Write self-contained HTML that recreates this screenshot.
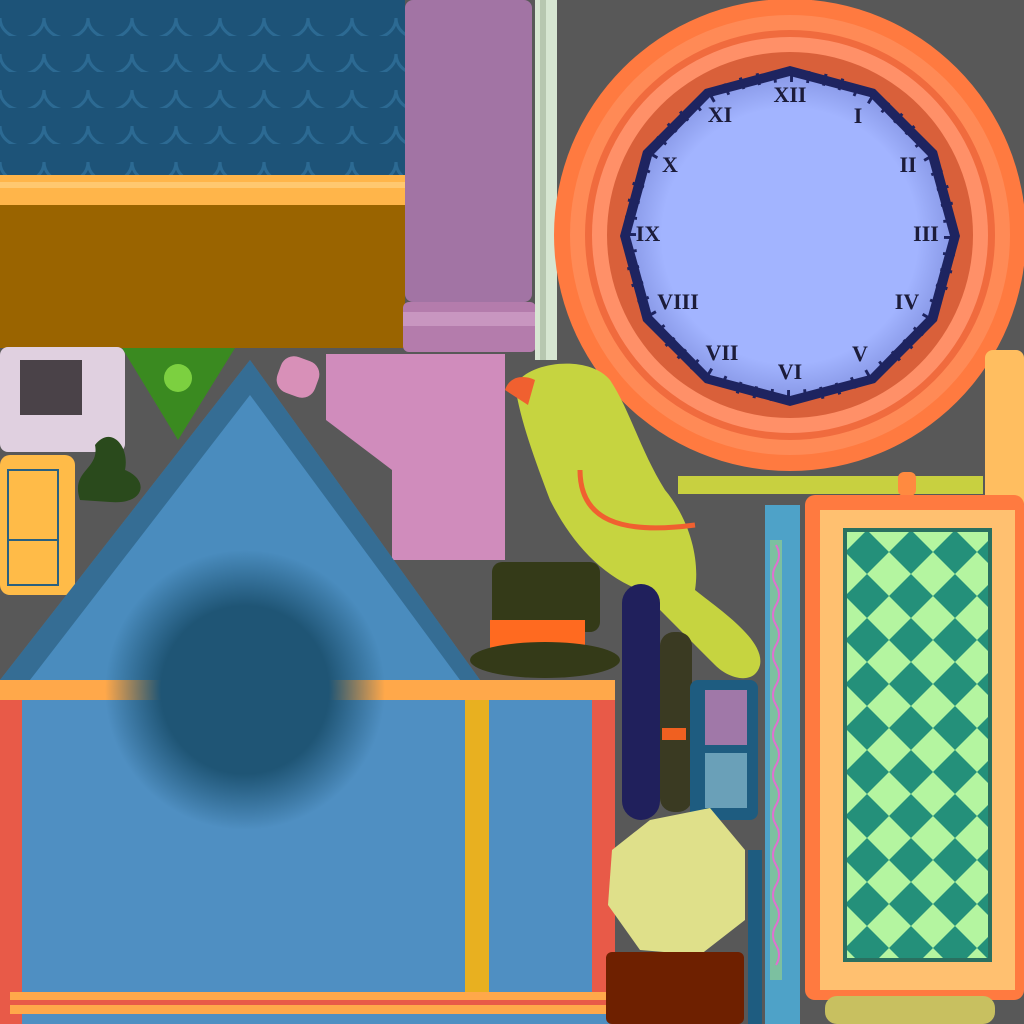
<!DOCTYPE html>
<html><head><meta charset="utf-8"><style>
html,body{margin:0;padding:0;background:#585858;}
svg{display:block}
text{font-family:"Liberation Serif",serif;fill:#1c1c3a;font-size:22px;font-weight:bold;text-anchor:middle;dominant-baseline:middle}
</style></head><body>
<svg width="1024" height="1024" viewBox="0 0 1024 1024" xmlns="http://www.w3.org/2000/svg">
<defs>
<pattern id="sc" width="44" height="36" patternUnits="userSpaceOnUse">
<rect width="44" height="36" fill="#1d5378"/>
<path d="M0 18 A22 20 0 0 0 44 18" fill="none" stroke="#2c6a93" stroke-width="3"/>
<path d="M-22 36 A22 20 0 0 0 22 36 M22 36 A22 20 0 0 0 66 36" fill="none" stroke="#2c6a93" stroke-width="3"/>
</pattern>
<pattern id="ck" width="44" height="44" patternUnits="userSpaceOnUse" x="845" y="530">
<rect width="44" height="44" fill="#b4f5a0"/>
<polygon points="22,0 44,22 22,44 0,22" fill="#24907a"/>
</pattern>
<radialGradient id="blob" cx="0.5" cy="0.5" r="0.5">
<stop offset="0.6" stop-color="#1f5575"/><stop offset="1" stop-color="#1f5575" stop-opacity="0"/>
</radialGradient>
<radialGradient id="dial" cx="0.5" cy="0.5" r="0.5">
<stop offset="0.8" stop-color="#a2b4ff"/><stop offset="1" stop-color="#8a9ae8"/>
</radialGradient>
</defs>
<rect width="1024" height="1024" fill="#585858"/>
<rect x="0" y="0" width="405" height="175" fill="url(#sc)"/>
<rect x="0" y="175" width="405" height="30" fill="#ffb54a"/>
<rect x="0" y="182" width="405" height="6" fill="#ffc870"/>
<rect x="0" y="205" width="405" height="143" fill="#9a6400"/>
<rect x="405" y="0" width="127" height="302" rx="8" fill="#a274a4"/>
<rect x="403" y="302" width="133" height="50" rx="6" fill="#b47cac"/>
<rect x="403" y="312" width="133" height="14" fill="#c896c0"/>
<rect x="535" y="0" width="22" height="360" fill="#d7e6d2"/>
<rect x="540" y="0" width="6" height="360" fill="#b7c7b0"/>
<circle cx="790" cy="235" r="236" fill="#ff7a40"/>
<circle cx="790" cy="235" r="220" fill="#ff8a56"/>
<circle cx="790" cy="235" r="205" fill="#f06b3e"/>
<circle cx="790" cy="235" r="198" fill="#ff9068"/>
<circle cx="790" cy="235" r="183" fill="#d9603a"/>
<polygon fill="#1e2460" points="790,66 875,89 937,151 960,236 937,321 875,383 790,406 705,383 643,321 620,236 643,151 705,89"/>
<polygon fill="url(#dial)" points="790,76 870,97 928,156 950,236 928,316 870,375 790,396 710,375 652,316 630,236 652,156 710,97"/>
<circle cx="790" cy="236" r="160" fill="none" stroke="#1e2460" stroke-width="12" stroke-dasharray="3 13.75"/>
<text x="790" y="97">XII</text><text x="858" y="118">I</text><text x="908" y="167">II</text>
<text x="926" y="236">III</text><text x="907" y="304">IV</text><text x="860" y="356">V</text>
<text x="790" y="374">VI</text><text x="722" y="355">VII</text><text x="678" y="304">VIII</text>
<text x="648" y="236">IX</text><text x="670" y="167">X</text><text x="720" y="117">XI</text>
<rect x="0" y="347" width="125" height="105" rx="8" fill="#e0d0e0"/>
<rect x="20" y="360" width="62" height="55" fill="#4a4248"/>
<polygon points="122,348 235,348 178,440" fill="#3a8a20"/>
<circle cx="178" cy="378" r="14" fill="#7cd040"/>
<path d="M80 500 C70 470 100 470 95 445 C110 425 130 445 125 470 C150 480 145 505 110 502 Z" fill="#2a4a1c"/>
<rect x="278" y="358" width="40" height="38" rx="14" fill="#d890b8" transform="rotate(20 298 377)"/>
<rect x="0" y="455" width="75" height="140" rx="10" fill="#ffbb48"/>
<rect x="8" y="470" width="50" height="115" fill="none" stroke="#2a6080" stroke-width="2"/>
<line x1="8" y1="540" x2="58" y2="540" stroke="#2a6080" stroke-width="2"/>
<path d="M326 354 L505 354 L505 560 L392 560 L392 470 L326 420 Z" fill="#d08cbc"/>
<polygon points="250,360 0,680 480,680" fill="#4a8cbe"/>
<polygon points="250,360 0,680 30,680 250,395 460,680 480,680" fill="#2c5f82" opacity="0.7"/>
<rect x="0" y="680" width="615" height="344" fill="#4f8fc2"/>
<rect x="0" y="680" width="615" height="20" fill="#ffa84a"/>
<rect x="0" y="700" width="22" height="324" fill="#e85a48"/>
<rect x="592" y="700" width="23" height="300" fill="#e85a48"/>
<rect x="465" y="700" width="24" height="300" fill="#e8b020"/>
<rect x="10" y="992" width="600" height="22" fill="#ffa84a"/>
<rect x="10" y="1000" width="600" height="5" fill="#e85a48"/>
<circle cx="245" cy="690" r="140" fill="url(#blob)"/>
<path d="M515 385 C530 360 590 355 610 380 C630 410 640 450 665 490 C690 520 700 560 695 590 C720 610 765 640 760 665 C755 685 730 680 715 665 C690 640 660 610 640 590 C600 575 570 540 550 500 C535 460 520 420 515 385 Z" fill="#c6d440"/>
<path d="M505 390 C510 375 525 375 535 380 L528 405 Z" fill="#f06030"/>
<path d="M580 470 C580 520 620 535 695 525" stroke="#f06030" stroke-width="5" fill="none"/>
<rect x="492" y="562" width="108" height="70" rx="10" fill="#343a18"/>
<rect x="490" y="620" width="95" height="40" fill="#ff6a20"/>
<ellipse cx="545" cy="660" rx="75" ry="18" fill="#343a18"/>
<rect x="622" y="584" width="38" height="236" rx="19" fill="#20205c"/>
<rect x="660" y="632" width="32" height="180" rx="14" fill="#3a3a22"/>
<rect x="662" y="728" width="24" height="12" fill="#f06020"/>
<rect x="690" y="680" width="68" height="140" rx="8" fill="#1e5c80"/>
<rect x="705" y="690" width="42" height="55" fill="#a078a8"/>
<rect x="705" y="753" width="42" height="55" fill="#6aa0b8"/>
<polygon points="650,820 710,808 745,850 745,920 700,955 640,950 608,905 612,850" fill="#dfe08a"/>
<rect x="606" y="952" width="138" height="72" rx="6" fill="#6e2000"/>
<rect x="678" y="476" width="305" height="18" fill="#c8d040"/>
<rect x="898" y="472" width="18" height="24" rx="6" fill="#ff8a40"/>
<rect x="765" y="505" width="35" height="519" fill="#4ea2c8"/>
<rect x="770" y="540" width="12" height="440" fill="#7cc0a0"/>
<path d="M776 545 q6 10 0 20 q-6 10 0 20 q6 10 0 20 q-6 10 0 20 q6 10 0 20 q-6 10 0 20 q6 10 0 20 q-6 10 0 20 q6 10 0 20 q-6 10 0 20 q6 10 0 20 q-6 10 0 20 q6 10 0 20 q-6 10 0 20 q6 10 0 20 q-6 10 0 20 q6 10 0 20 q-6 10 0 20 q6 10 0 20 q-6 10 0 20 q6 10 0 20" stroke="#e070d0" stroke-width="2" fill="none"/>
<rect x="748" y="850" width="14" height="174" fill="#1e5c80"/>
<rect x="985" y="350" width="39" height="160" rx="8" fill="#ffbe60"/>
<rect x="805" y="495" width="219" height="505" rx="10" fill="#ff7a40"/>
<rect x="820" y="510" width="195" height="480" fill="#ffc070"/>
<rect x="845" y="530" width="145" height="430" fill="url(#ck)" stroke="#2a7060" stroke-width="4"/>
<rect x="825" y="996" width="170" height="28" rx="12" fill="#c8c060"/>
</svg>
</body></html>
